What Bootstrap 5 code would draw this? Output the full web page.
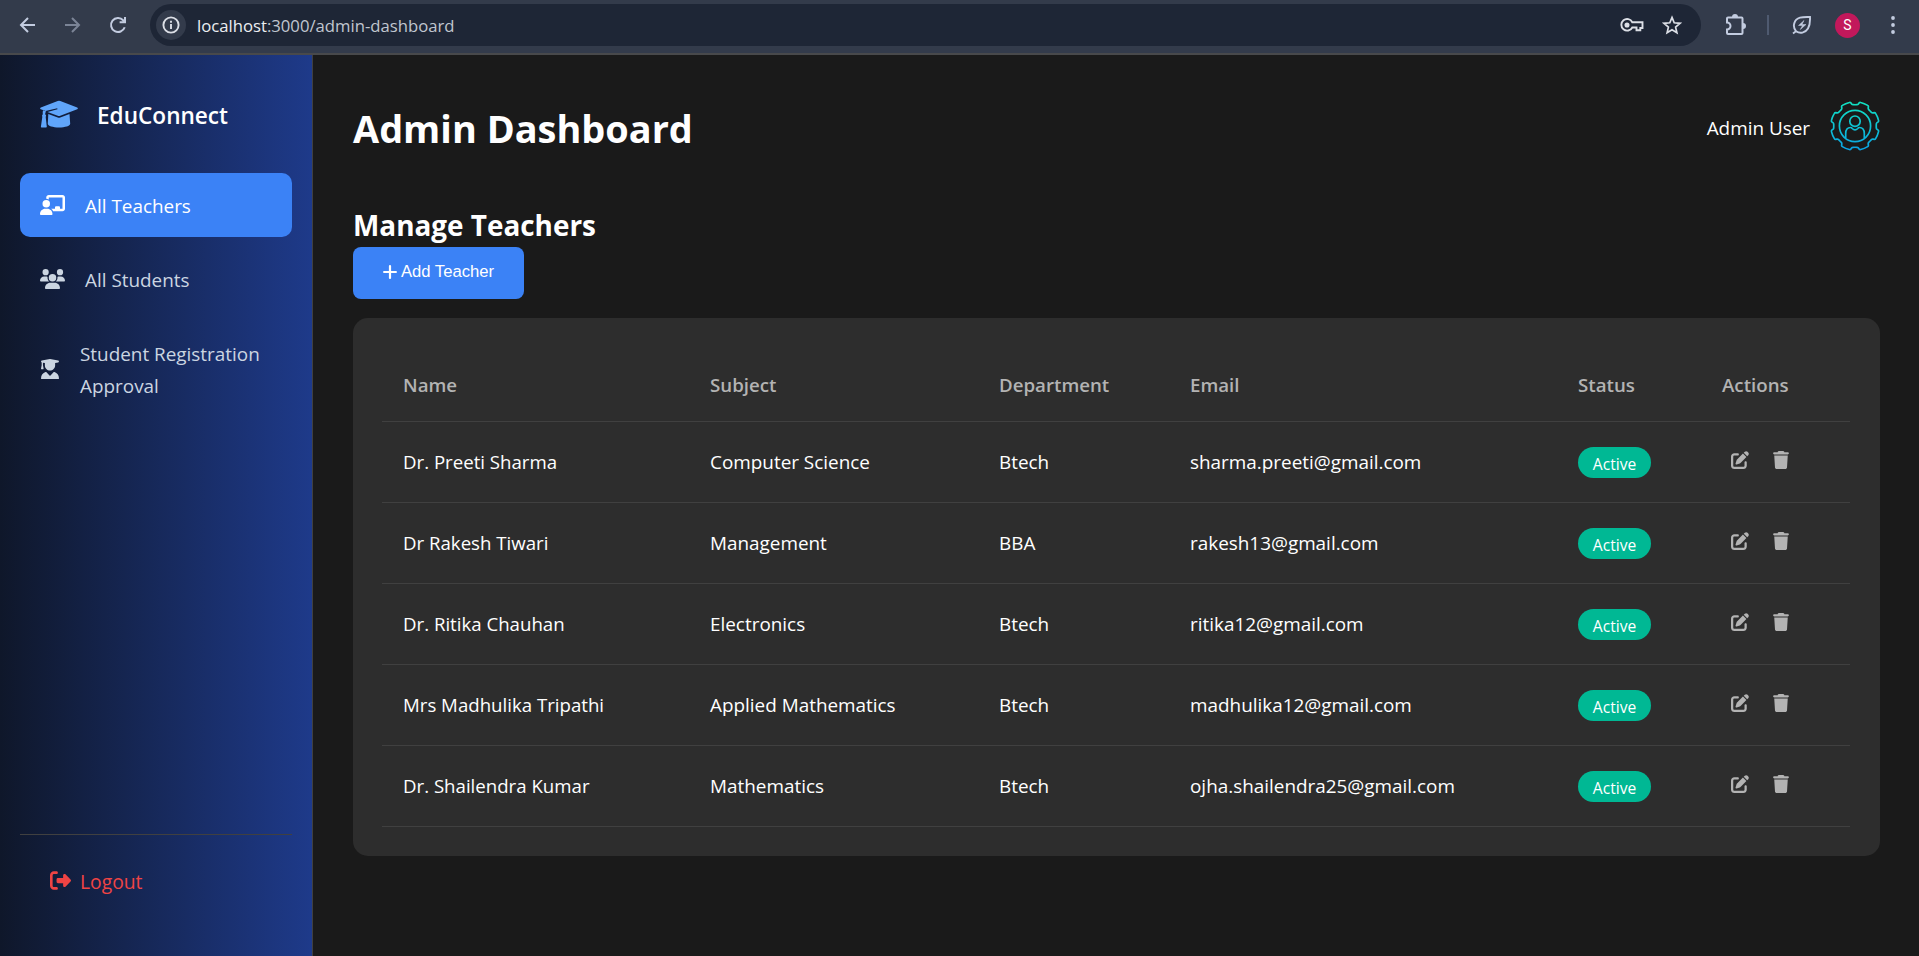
<!DOCTYPE html>
<html lang="en">
<head>
<meta charset="utf-8">
<meta name="viewport" content="width=device-width, initial-scale=1">
<title>Admin Dashboard</title>
<link href="https://cdn.jsdelivr.net/npm/bootstrap@5.3.0/dist/css/bootstrap.min.css" rel="stylesheet">
<style>
body{font-family:"Open Sans","Noto Sans",sans-serif;font-size:18.9px;background:#1a1a1a;color:#fff;height:956px;overflow:hidden}
svg{display:block;flex:none}
.chrome-bar{height:55px;background:#333b4b;border-bottom:2px solid #48494b;color:#c3cce0;padding:4px 23px 7px 17px}
.chrome-bar .omni{height:42px;background:#1e2636;border-radius:21px;margin-left:22px;padding:0 19px 0 6px;color:#dcdfe6}
.site-info{width:30px;height:30px;background:#333b4b;border-radius:50%}
.url-text{font-size:16.7px;margin-left:11px;color:#c1c6d0;padding-top:1px}
.url-text b{font-weight:400;color:#eceef2}
.profile-dot{width:25px;height:25px;border-radius:50%;background:#c2185b;color:#fff;font:14px "Roboto",sans-serif}
.side{width:313px;background:linear-gradient(90deg,#0f172a,#1e3a8a);border-right:1px solid #404040;padding:20px 20px 20px}
.brand-row{height:78px;padding:0 20px;margin-bottom:20px;gap:19px;color:#60a5fa}
.brand-row span{font-size:22.6px;font-weight:600;color:#fff;padding-top:4px}
.side-link{min-height:64px;padding:16px 20px;gap:20px;border-radius:10px;color:#cbd5e1;line-height:32px;margin-bottom:10px;text-decoration:none}
.side-link span{margin:1px -4px -1px 0}
.side-link.on{background:#3b82f6;color:#fff}
.logout-box{border-top:1px solid #404040;height:102px;padding:20px 30px;color:#ef4444}
.logout-box a{gap:9px;line-height:52px;color:#ef4444;text-decoration:none}
.logout-box span{font-size:19.3px;margin-top:1px}
.logout-box svg{margin-top:-2px}
.content-area{padding:40px 39px 40px 40px}
.page-head{height:66px;margin-bottom:33px}
.page-head h1{font-size:37.9px;font-weight:700;margin:0;padding-top:2px}
h2.section-title{font-size:27.9px;font-weight:700;line-height:40px;margin:0;padding-top:11px;height:53px}
.btn-add{background:#3b82f6;color:#fff;width:171px;height:52px;border-radius:8px;font:16.67px "Liberation Sans",Arial,sans-serif;gap:4px;padding:0 0 2px}
.panel{background:#2d2d2d;border-radius:15px;margin-top:19px;padding:30px 30px 30px 29px;height:538px}
.grid-table{table-layout:fixed;width:1468px;margin:0;--bs-table-bg:transparent;--bs-table-color:#fff;color:#fff}
.grid-table>:not(caption)>*>*{padding:1px 20px 0 21px;border-bottom:1px solid #404040;height:81px;vertical-align:middle;color:#fff;line-height:30px;white-space:nowrap}
.grid-table>thead>tr>th{height:73px;padding-top:2px;font-size:18.7px;font-weight:600;color:#b3b3b3}
.grid-table>tbody>tr>td:first-child{font-size:18.65px}
.pill{display:inline-flex;background:#00b894;border-radius:16px;width:73px;height:31px;font-size:15.6px;justify-content:center;align-items:center;padding-top:2px;vertical-align:middle}
.acts{gap:24px;color:#b3b3b3;padding-left:9px;position:relative;top:-2px}
</style>
</head>
<body class="d-flex flex-column">
<svg width="0" height="0" class="position-absolute">
<symbol id="i-edit" viewBox="0 0 512 512"><path fill="currentColor" d="M471.6 21.7c-21.9-21.9-57.3-21.9-79.2 0L362.3 51.7l97.9 97.9 30.1-30.1c21.9-21.9 21.9-57.3 0-79.2L471.6 21.7zm-299.2 220c-6.1 6.1-10.8 13.6-13.5 21.9l-29.6 88.8c-2.9 8.6-.6 18.1 5.8 24.6s15.9 8.7 24.6 5.8l88.8-29.6c8.2-2.7 15.7-7.4 21.9-13.5L437.7 172.3 339.7 74.3 172.4 241.7zM96 64C43 64 0 107 0 160V416c0 53 43 96 96 96H352c53 0 96-43 96-96V320c0-17.7-14.3-32-32-32s-32 14.3-32 32v96c0 17.7-14.3 32-32 32H96c-17.7 0-32-14.3-32-32V160c0-17.7 14.3-32 32-32h96c17.7 0 32-14.3 32-32s-14.3-32-32-32H96z"/></symbol>
<symbol id="i-trash" viewBox="0 0 448 512"><path fill="currentColor" d="M135.2 17.7L128 32H32C14.3 32 0 46.3 0 64S14.3 96 32 96H416c17.7 0 32-14.3 32-32s-14.3-32-32-32H320l-7.2-14.3C307.4 6.8 296.3 0 284.2 0H163.8c-12.1 0-23.2 6.8-28.6 17.7zM416 128H32L53.2 467c1.6 25.3 22.6 45 47.9 45H346.9c25.3 0 46.3-19.7 47.9-45L416 128z"/></symbol>
</svg>

<header class="chrome-bar d-flex align-items-center flex-shrink-0">
  <svg width="20" height="20" viewBox="0 0 20 20" fill="none" stroke="currentColor" stroke-width="2"><path d="M18 10H4M11 3l-7 7 7 7"/></svg>
  <svg class="opacity-50" style="margin-left:26px" width="20" height="20" viewBox="0 0 20 20" fill="none" stroke="currentColor" stroke-width="2"><path d="M2 10h14M9 3l7 7-7 7"/></svg>
  <svg style="margin-left:25px" width="20" height="20" viewBox="0 0 20 20" fill="none" stroke="currentColor" stroke-width="2"><path d="M16.7 12.2A7 7 0 1 1 15.2 5.2L17 7M17 2v5.2h-5.4"/></svg>
  <div class="omni d-flex align-items-center flex-grow-1">
    <div class="site-info d-flex align-items-center justify-content-center"><svg width="18" height="18" viewBox="0 0 18 18" fill="none" stroke="currentColor" stroke-width="1.9"><circle cx="9" cy="9" r="7.6"/><path d="M9 8v5M9 4.8v2"/></svg></div>
    <div class="url-text flex-grow-1"><b>localhost</b>:3000/admin-dashboard</div>
    <svg width="24" height="16" viewBox="0 0 24 16" fill="none" stroke="currentColor" stroke-width="1.9"><path d="M12.3 5.2H22.5V11h-2.2v2.3h-3.8V10.5h-4.2A5.8 5.8 0 1 1 12.3 5.2z"/><circle cx="7" cy="8" r="1.6" fill="currentColor"/></svg>
    <svg style="margin-left:18px" width="20" height="20" viewBox="0 0 20 20" fill="none" stroke="currentColor" stroke-width="1.7"><path d="M10 2.4l2.2 5.4 5.8.5-4.4 3.8 1.3 5.7-4.9-3-4.9 3 1.3-5.7L2 8.3l5.8-.5z"/></svg>
  </div>
  <svg style="margin-left:24px" width="22" height="22" viewBox="0 0 22 22" fill="none" stroke="currentColor" stroke-width="2"><path d="M3 3.500h13.500a1 1 0 0 1 1 1v14.500a1 1 0 0 1-1 1H3a1 1 0 0 1-1-1v-3.500a3.200 3.200 0 0 0 0-7V4.500a1 1 0 0 1 1-1z"/><path fill="currentColor" stroke="none" d="M7 3a3 3 0 0 1 6 0zM18 9a3 3 0 0 1 0 6z"/></svg>
  <div style="margin:0 23px 0 20px;width:2px;height:20px;background:#4f5a70"></div>
  <svg width="20" height="20" viewBox="0 0 20 20" fill="none" stroke="currentColor" stroke-width="1.900"><path d="M1 18.500l3-2.300C0 11.500 2 4.500 8 2.700c3.500-1 7-.7 10-.7.200 4 0 8-2 11.500-2.700 4.500-8 5.500-12 2.700"/><path d="M12 5.500L6.500 10.500h4L8.300 14.500l5.700-5h-4z" fill="currentColor" stroke-width=".5"/></svg>
  <div class="profile-dot d-flex align-items-center justify-content-center" style="margin-left:23px">S</div>
  <svg style="margin-left:30px" width="6" height="20" viewBox="0 0 6 20" fill="currentColor"><circle cx="3" cy="3" r="1.900"/><circle cx="3" cy="10" r="1.900"/><circle cx="3" cy="17" r="1.900"/></svg>
</header>

<div class="d-flex flex-grow-1">
  <aside class="side d-flex flex-column flex-shrink-0">
    <div class="brand-row d-flex align-items-center">
      <svg width="38" height="28" viewBox="0 0 38 28" fill="currentColor"><path d="M17.700 1Q19 .5 20.300 1L37.200 7.600Q38.500 8.500 37.200 9.300L20.300 15.700Q19 16.200 17.700 15.700L7.500 11.900 17.500 9.200 17.200 8.200 5.600 11.100 .8 9.300Q-.5 8.500 .8 7.600Z"/><path d="M3 10.200L6.200 11.400Q5 12.400 5.200 14.300Q6.800 15.400 5.700 17L6.800 26.800Q6.800 27.500 6 27.500H1.600Q.8 27.500 .9 26.800L2.300 17Q1.500 15.300 2.800 14.300Q2.500 12 3 10.200Z"/><path d="M8.300 14L17.700 17.500Q19 18 20.300 17.500L29.500 14L30.200 23.800C30.200 26 25 27.500 19 27.500S7.800 26 7.800 23.800Z"/></svg>
      <span>EduConnect</span>
    </div>
    <nav class="d-flex flex-column flex-grow-1">
      <a class="side-link on d-flex align-items-center"><svg width="25" height="20" viewBox="0 0 640 512"><path fill="currentColor" d="M160 64c0-35.300 28.700-64 64-64H576c35.300 0 64 28.700 64 64V352c0 35.300-28.700 64-64 64H336.800c-11.800-25.500-29.900-47.500-52.400-64H384V320c0-17.700 14.300-32 32-32h64c17.700 0 32 14.300 32 32v32h64V64L224 64v49.100C205.200 102.200 183.300 96 160 96V64zm0 64a96 96 0 1 1 0 192 96 96 0 1 1 0-192zM133.300 352h53.300C260.300 352 320 411.700 320 485.300c0 14.700-11.900 26.700-26.700 26.700H26.700C11.900 512 0 500.100 0 485.300C0 411.700 59.700 352 133.300 352z"/></svg><span>All Teachers</span></a>
      <a class="side-link d-flex align-items-center"><svg width="25" height="20" viewBox="0 0 640 512"><path fill="currentColor" d="M144 0a80 80 0 1 1 0 160A80 80 0 1 1 144 0zM512 0a80 80 0 1 1 0 160A80 80 0 1 1 512 0zM0 298.700C0 239.800 47.800 192 106.700 192h42.700c15.900 0 31 3.500 44.600 9.700c-1.300 7.200-1.900 14.700-1.900 22.300c0 38.200 16.800 72.500 43.300 96c-.2 0-.4 0-.7 0H21.300C9.600 320 0 310.400 0 298.700zM405.300 320c-.2 0-.4 0-.7 0c26.600-23.500 43.300-57.800 43.300-96c0-7.600-.7-15-1.900-22.300c13.600-6.300 28.700-9.700 44.600-9.700h42.700C592.200 192 640 239.800 640 298.700c0 11.800-9.600 21.300-21.300 21.300H405.300zM224 224a96 96 0 1 1 192 0 96 96 0 1 1 -192 0zM128 485.300C128 411.700 187.700 352 261.300 352H378.700C452.300 352 512 411.700 512 485.300c0 14.700-11.900 26.700-26.700 26.700H154.700c-14.700 0-26.700-11.900-26.700-26.700z"/></svg><span>All Students</span></a>
      <a class="side-link d-flex align-items-center"><svg width="20" height="20.500" viewBox="-25 0 498 512"><path fill="currentColor" d="M219.300 .5c3.100-.6 6.300-.6 9.400 0l200 40C439.900 42.700 448 52.600 448 64s-8.100 21.300-19.300 23.500L352 102.900V160c0 70.700-57.300 128-128 128s-128-57.300-128-128V102.900L48 93.300v65.100l15.700 78.400c.9 4.700-.3 9.600-3.300 13.300s-7.600 5.900-12.400 5.900H16c-4.800 0-9.300-2.100-12.400-5.900s-4.300-8.600-3.300-13.300L16 158.400V86.600C6.500 83.300 0 74.300 0 64C0 52.600 8.100 42.700 19.300 40.500l200-40zM111.900 327.700c10.500-3.400 21.800 .4 29.400 8.500l71 75.500c6.300 6.700 17 6.700 23.300 0l71-75.500c7.600-8.100 18.900-11.900 29.400-8.500C401 348.600 448 409.400 448 481.300c0 17-13.800 30.700-30.700 30.700H30.700C13.800 512 0 498.200 0 481.300c0-71.900 47-132.700 111.900-153.600z"/></svg><span>Student Registration Approval</span></a>
    </nav>
    <div class="logout-box"><a class="d-flex align-items-center"><svg width="21" height="21" viewBox="0 0 512 512"><path fill="currentColor" d="M377.900 105.900L500.700 228.700c7.200 7.200 11.300 17.100 11.300 27.300s-4.100 20.100-11.300 27.300L377.900 406.100c-6.400 6.400-15 9.900-24 9.900c-18.700 0-33.900-15.200-33.900-33.900l0-62.100-128 0c-17.700 0-32-14.300-32-32l0-64c0-17.700 14.300-32 32-32l128 0 0-62.100c0-18.700 15.200-33.900 33.900-33.900c9 0 17.600 3.600 24 9.900zM160 96L96 96c-17.700 0-32 14.300-32 32l0 256c0 17.700 14.300 32 32 32l64 0c17.700 0 32 14.300 32 32s-14.300 32-32 32l-64 0c-53 0-96-43-96-96L0 128C0 75 43 32 96 32l64 0c17.700 0 32 14.300 32 32s-14.300 32-32 32z"/></svg><span>Logout</span></a></div>
  </aside>

  <main class="content-area flex-grow-1">
    <div class="page-head d-flex justify-content-between align-items-center">
      <h1>Admin Dashboard</h1>
      <div class="d-flex align-items-center" style="gap:20px">
        <span class="user-name">Admin User</span>
        <svg class="mb-1" width="50" height="50" viewBox="-25 -25 50 50">
          <defs>
            <linearGradient id="teal" x1="0" y1="0" x2="0" y2="1"><stop offset="0" stop-color="#12e3c0"/><stop offset="1" stop-color="#0aa2e6"/></linearGradient>
            <path id="tooth" d="M-8.200-19.600L-6.400-20.400Q-5.500-20.800-5.300-21.700L-5-23Q-4.700-23.800-3.800-23.900Q0-24.500 3.800-23.900Q4.700-23.800 5-23L5.300-21.700Q5.500-20.800 6.400-20.400L8.200-19.600"/>
            <mask id="gear" maskUnits="userSpaceOnUse" x="-25" y="-25" width="50" height="50">
              <g fill="none" stroke="#fff" stroke-width="1.700">
                <use href="#tooth" transform="rotate(22.500)"/><use href="#tooth" transform="rotate(67.500)"/><use href="#tooth" transform="rotate(112.500)"/><use href="#tooth" transform="rotate(157.500)"/><use href="#tooth" transform="rotate(202.500)"/><use href="#tooth" transform="rotate(247.500)"/><use href="#tooth" transform="rotate(292.500)"/><use href="#tooth" transform="rotate(337.500)"/>
                <circle r="15.600"/><circle cy="-4.800" r="5.200"/><path d="M-9.300 12.300V7.500Q-9.300 1.500-4.300 1.500Q-3.500 1.500-2.800 2.500Q0 5.300 2.800 2.500Q3.500 1.500 4.300 1.500Q9.300 1.500 9.300 7.500V12.300"/>
              </g>
            </mask>
          </defs>
          <rect x="-25" y="-25" width="50" height="50" fill="url(#teal)" mask="url(#gear)"/>
        </svg>
      </div>
    </div>
    <h2 class="section-title">Manage Teachers</h2>
    <button class="btn btn-add border-0 d-flex align-items-center justify-content-center"><svg width="14" height="14" viewBox="0 0 14 14" stroke="#fff" stroke-width="2.200" stroke-linecap="round"><path d="M7 1.100v11.800M1.100 7h11.800"/></svg><span>Add Teacher</span></button>
    <section class="panel">
      <table class="table grid-table">
        <colgroup><col style="width:307px"><col style="width:289px"><col style="width:191px"><col style="width:388px"><col style="width:144px"><col style="width:149px"></colgroup>
        <thead><tr><th>Name</th><th>Subject</th><th>Department</th><th>Email</th><th>Status</th><th>Actions</th></tr></thead>
        <tbody>
          <tr><td>Dr. Preeti Sharma</td><td>Computer Science</td><td>Btech</td><td>sharma.preeti@gmail.com</td><td><span class="pill">Active</span></td><td><div class="acts d-flex"><svg width="18" height="18"><use href="#i-edit"/></svg><svg width="16" height="18"><use href="#i-trash"/></svg></div></td></tr>
          <tr><td>Dr Rakesh Tiwari</td><td>Management</td><td>BBA</td><td>rakesh13@gmail.com</td><td><span class="pill">Active</span></td><td><div class="acts d-flex"><svg width="18" height="18"><use href="#i-edit"/></svg><svg width="16" height="18"><use href="#i-trash"/></svg></div></td></tr>
          <tr><td>Dr. Ritika Chauhan</td><td>Electronics</td><td>Btech</td><td>ritika12@gmail.com</td><td><span class="pill">Active</span></td><td><div class="acts d-flex"><svg width="18" height="18"><use href="#i-edit"/></svg><svg width="16" height="18"><use href="#i-trash"/></svg></div></td></tr>
          <tr><td>Mrs Madhulika Tripathi</td><td>Applied Mathematics</td><td>Btech</td><td>madhulika12@gmail.com</td><td><span class="pill">Active</span></td><td><div class="acts d-flex"><svg width="18" height="18"><use href="#i-edit"/></svg><svg width="16" height="18"><use href="#i-trash"/></svg></div></td></tr>
          <tr><td>Dr. Shailendra Kumar</td><td>Mathematics</td><td>Btech</td><td>ojha.shailendra25@gmail.com</td><td><span class="pill">Active</span></td><td><div class="acts d-flex"><svg width="18" height="18"><use href="#i-edit"/></svg><svg width="16" height="18"><use href="#i-trash"/></svg></div></td></tr>
        </tbody>
      </table>
    </section>
  </main>
</div>
<script src="https://cdn.jsdelivr.net/npm/bootstrap@5.3.0/dist/js/bootstrap.bundle.min.js"></script>
</body>
</html>
